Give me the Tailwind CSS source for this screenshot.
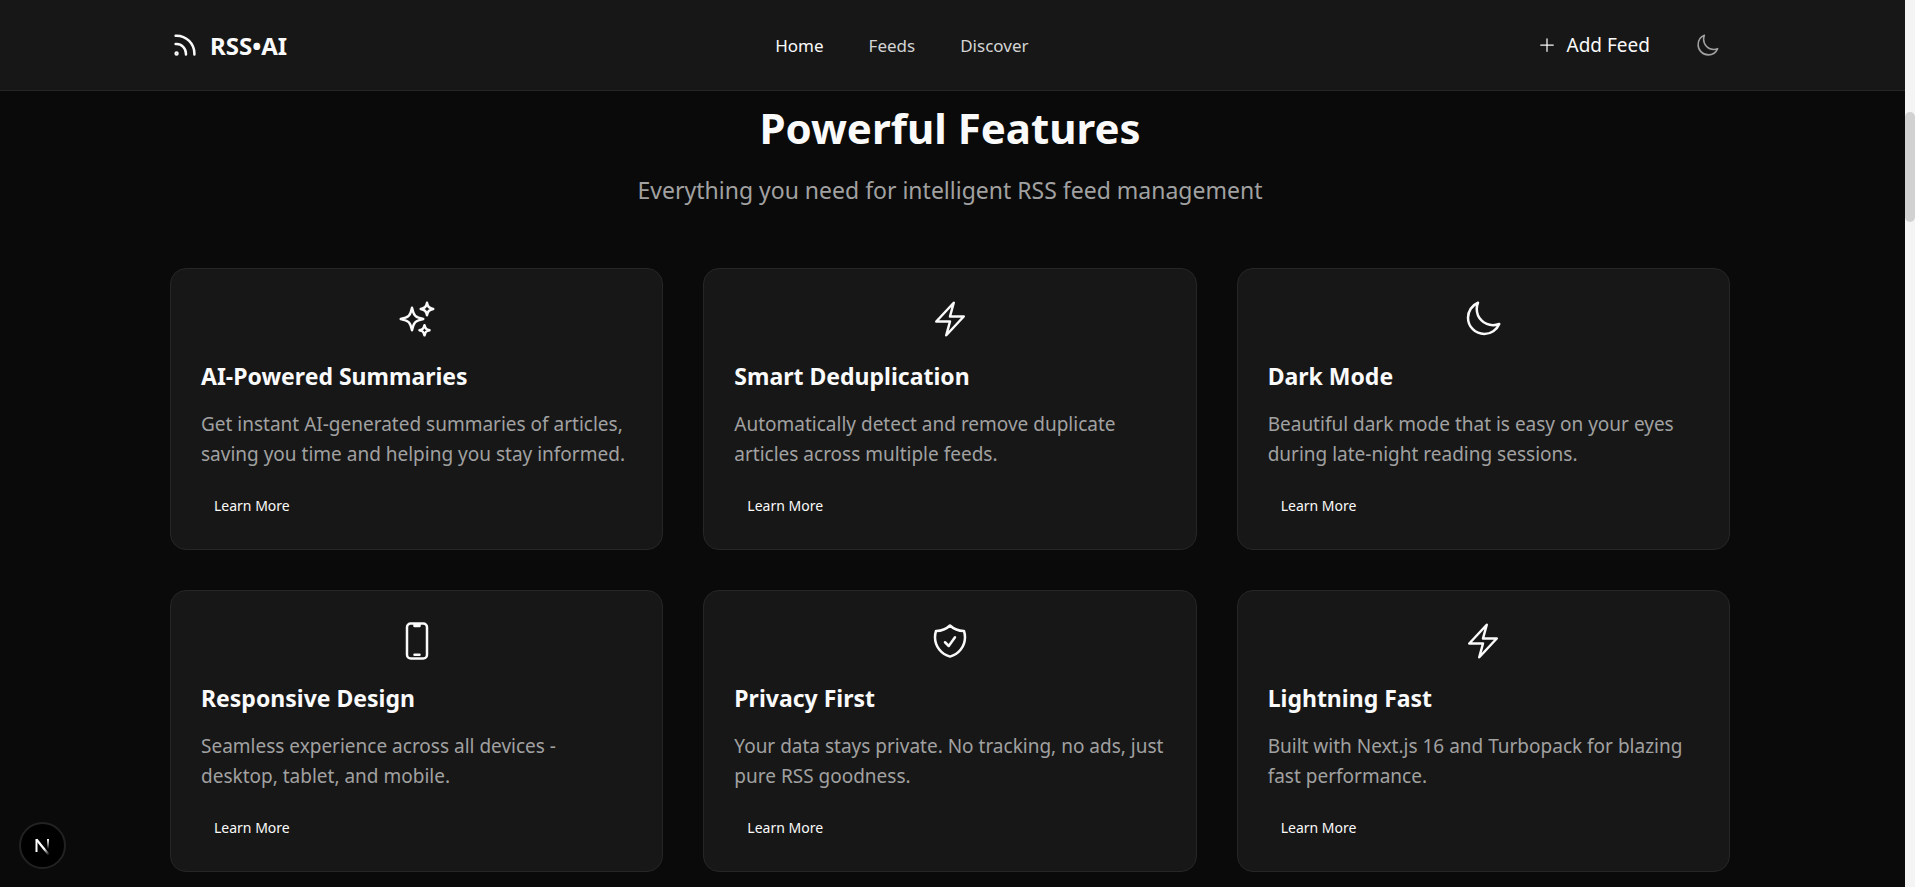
<!DOCTYPE html>
<html lang="en">
<head>
<meta charset="utf-8">
<meta name="viewport" content="width=device-width, initial-scale=1">
<title>RSS•AI</title>
<script src="https://cdn.jsdelivr.net/npm/@tailwindcss/browser@4"></script>
</head>
<body class="h-screen overflow-hidden bg-neutral-950 pr-[10px] font-['Noto_Sans',sans-serif] text-neutral-50 antialiased">

<svg class="hidden" aria-hidden="true">
  <symbol id="bolt" viewBox="0 0 24 24"><path d="m3.75 13.5 10.5-11.25L12 10.5h8.25L9.75 21.75 12 13.5H3.75Z"/></symbol>
  <symbol id="moon" viewBox="0 0 24 24"><path d="M21.752 15.002A9.72 9.72 0 0 1 18 15.75c-5.385 0-9.75-4.365-9.75-9.75 0-1.33.266-2.597.748-3.752A9.753 9.753 0 0 0 3 11.25C3 16.635 7.365 21 12.75 21a9.753 9.753 0 0 0 9.002-5.998Z"/></symbol>
</svg>

<header class="border-b border-neutral-800 bg-neutral-900 pr-[5px]">
  <div class="mx-auto flex h-[90px] max-w-[1600px] items-center justify-between px-5">
    <a href="#" class="flex items-center gap-[10px] text-[24px] leading-[35px] font-bold">
      <svg class="size-[30px] fill-none stroke-current stroke-2" viewBox="0 0 24 24" stroke-linecap="round" stroke-linejoin="round"><path d="M12.75 19.5v-.75a7.5 7.5 0 0 0-7.5-7.5H4.5m0-6.75h.75c7.87 0 14.25 6.38 14.25 14.25v.75M6 18.75a.75.75 0 1 1-1.5 0 .75.75 0 0 1 1.5 0Z"/></svg>
      <span>RSS•AI</span>
    </a>
    <nav class="flex items-center gap-[45px] text-[17px] leading-[25px]">
      <a href="#">Home</a>
      <a href="#" class="text-neutral-300">Feeds</a>
      <a href="#" class="text-neutral-300">Discover</a>
    </nav>
    <div class="flex items-center gap-[15px]">
      <button type="button" class="flex h-[45px] items-center gap-[10px] px-5 text-[19px]">
        <svg class="size-5 fill-none stroke-current stroke-[1.5]" viewBox="0 0 24 24" stroke-linecap="round"><path d="M12 4.5v15m7.5-7.5h-15"/></svg>
        Add Feed
      </button>
      <button type="button" aria-label="Toggle dark mode" class="grid size-[45px] place-items-center text-neutral-400">
        <svg class="size-[25px] fill-none stroke-current stroke-[1.5]" stroke-linecap="round" stroke-linejoin="round"><use href="#moon"/></svg>
      </button>
    </div>
  </div>
</header>

<main class="pt-3 pr-[5px]">
  <section class="mx-auto max-w-[1600px] px-5">
    <div class="mb-[60px] text-center">
      <h2 class="mb-5 text-[42px] leading-[50px] font-bold">Powerful Features</h2>
      <p class="text-[23px] leading-[35px] text-neutral-400">Everything you need for intelligent RSS feed management</p>
    </div>

    <div class="grid grid-cols-3 gap-10">
      <article class="rounded-2xl border border-neutral-800 bg-neutral-900 px-[30px] pt-[30px] pb-[26px]">
        <svg class="mx-auto mb-5 size-10 fill-none stroke-current stroke-[1.5]" viewBox="0 0 24 24" stroke-linecap="round" stroke-linejoin="round"><path d="M9.813 15.904 9 18.75l-.813-2.846a4.5 4.5 0 0 0-3.09-3.09L2.25 12l2.846-.813a4.5 4.5 0 0 0 3.09-3.09L9 5.25l.813 2.846a4.5 4.5 0 0 0 3.09 3.09L15.75 12l-2.846.813a4.5 4.5 0 0 0-3.09 3.09ZM18.259 8.715 18 9.75l-.259-1.035a3.375 3.375 0 0 0-2.455-2.456L14.25 6l1.036-.259a3.375 3.375 0 0 0 2.455-2.456L18 2.25l.259 1.035a3.375 3.375 0 0 0 2.456 2.456L21.75 6l-1.035.259a3.375 3.375 0 0 0-2.456 2.456ZM16.894 20.567 16.5 21.75l-.394-1.183a2.25 2.25 0 0 0-1.423-1.423L13.5 18.75l1.183-.394a2.25 2.25 0 0 0 1.423-1.423l.394-1.183.394 1.183a2.25 2.25 0 0 0 1.423 1.423l1.183.394-1.183.394a2.25 2.25 0 0 0-1.423 1.423Z"/></svg>
        <h3 class="mb-[15px] text-[23px] leading-[35px] font-bold">AI-Powered Summaries</h3>
        <p class="mb-5 text-[19px] leading-[30px] text-neutral-400">Get instant AI-generated summaries of articles, saving you time and helping you stay informed.</p>
        <button type="button" class="block px-[13px] text-[14px] leading-[34px]">Learn More</button>
      </article>

      <article class="rounded-2xl border border-neutral-800 bg-neutral-900 px-[30px] pt-[30px] pb-[26px]">
        <svg class="mx-auto mb-5 size-10 fill-none stroke-current stroke-[1.5]" stroke-linecap="round" stroke-linejoin="round"><use href="#bolt"/></svg>
        <h3 class="mb-[15px] text-[23px] leading-[35px] font-bold">Smart Deduplication</h3>
        <p class="mb-5 text-[19px] leading-[30px] text-neutral-400">Automatically detect and remove duplicate articles across multiple feeds.</p>
        <button type="button" class="block px-[13px] text-[14px] leading-[34px]">Learn More</button>
      </article>

      <article class="rounded-2xl border border-neutral-800 bg-neutral-900 px-[30px] pt-[30px] pb-[26px]">
        <svg class="mx-auto mb-5 size-10 fill-none stroke-current stroke-[1.5]" stroke-linecap="round" stroke-linejoin="round"><use href="#moon"/></svg>
        <h3 class="mb-[15px] text-[23px] leading-[35px] font-bold">Dark Mode</h3>
        <p class="mb-5 text-[19px] leading-[30px] text-neutral-400">Beautiful dark mode that is easy on your eyes during late-night reading sessions.</p>
        <button type="button" class="block px-[13px] text-[14px] leading-[34px]">Learn More</button>
      </article>

      <article class="rounded-2xl border border-neutral-800 bg-neutral-900 px-[30px] pt-[30px] pb-[26px]">
        <svg class="mx-auto mb-5 size-10 fill-none stroke-current stroke-[1.5]" viewBox="0 0 24 24" stroke-linecap="round" stroke-linejoin="round"><path d="M10.5 1.5H8.25A2.25 2.25 0 0 0 6 3.75v16.5a2.25 2.25 0 0 0 2.25 2.25h7.5A2.25 2.25 0 0 0 18 20.25V3.75a2.25 2.25 0 0 0-2.25-2.25H13.5m-3 0V3h3V1.5m-3 0h3m-3 18.75h3"/></svg>
        <h3 class="mb-[15px] text-[23px] leading-[35px] font-bold">Responsive Design</h3>
        <p class="mb-5 text-[19px] leading-[30px] text-neutral-400">Seamless experience across all devices -<br>desktop, tablet, and mobile.</p>
        <button type="button" class="block px-[13px] text-[14px] leading-[34px]">Learn More</button>
      </article>

      <article class="rounded-2xl border border-neutral-800 bg-neutral-900 px-[30px] pt-[30px] pb-[26px]">
        <svg class="mx-auto mb-5 size-10 fill-none stroke-current stroke-[1.5]" viewBox="0 0 24 24" stroke-linecap="round" stroke-linejoin="round"><path d="M9 12.75 11.25 15 15 9.75m-3-7.036A11.959 11.959 0 0 1 3.598 6 11.99 11.99 0 0 0 3 9.749c0 5.592 3.824 10.29 9 11.623 5.176-1.332 9-6.03 9-11.622 0-1.31-.21-2.571-.598-3.751h-.152c-3.196 0-6.1-1.248-8.25-3.285Z"/></svg>
        <h3 class="mb-[15px] text-[23px] leading-[35px] font-bold">Privacy First</h3>
        <p class="mb-5 text-[19px] leading-[30px] text-neutral-400">Your data stays private. No tracking, no ads, just pure RSS goodness.</p>
        <button type="button" class="block px-[13px] text-[14px] leading-[34px]">Learn More</button>
      </article>

      <article class="rounded-2xl border border-neutral-800 bg-neutral-900 px-[30px] pt-[30px] pb-[26px]">
        <svg class="mx-auto mb-5 size-10 fill-none stroke-current stroke-[1.5]" stroke-linecap="round" stroke-linejoin="round"><use href="#bolt"/></svg>
        <h3 class="mb-[15px] text-[23px] leading-[35px] font-bold">Lightning Fast</h3>
        <p class="mb-5 text-[19px] leading-[30px] text-neutral-400">Built with Next.js 16 and Turbopack for blazing fast performance.</p>
        <button type="button" class="block px-[13px] text-[14px] leading-[34px]">Learn More</button>
      </article>
    </div>
  </section>
</main>

<!-- Dev tools badge -->
<button type="button" aria-label="Open Next.js Dev Tools" class="fixed bottom-[18px] left-[19px] grid size-[47px] place-items-center rounded-full border-2 border-[#222222] bg-black">
  <svg class="size-[41px] fill-none" viewBox="0 0 41 41">
    <defs>
      <linearGradient id="diag" x1="23" y1="23" x2="28" y2="29" gradientUnits="userSpaceOnUse"><stop stop-color="#fff"/><stop offset="1" stop-color="#fff" stop-opacity="0"/></linearGradient>
      <linearGradient id="stem" x1="26" y1="14" x2="26" y2="24" gradientUnits="userSpaceOnUse"><stop stop-color="#fff"/><stop offset="1" stop-color="#fff" stop-opacity="0"/></linearGradient>
    </defs>
    <path d="M14.5 27V14" stroke="#fff" stroke-width="2"/>
    <path d="M14.5 14.5 27 30" stroke="url(#diag)" stroke-width="2.2"/>
    <path d="M26 14v10" stroke="url(#stem)" stroke-width="2"/>
  </svg>
</button>

<!-- Scroll track and thumb -->
<div aria-hidden="true" class="fixed inset-y-0 right-0 w-[10px] bg-[#f4f4f4] pt-[112px]">
  <div class="h-[110px] rounded-full bg-[#d1d1d1]"></div>
</div>

</body>
</html>
